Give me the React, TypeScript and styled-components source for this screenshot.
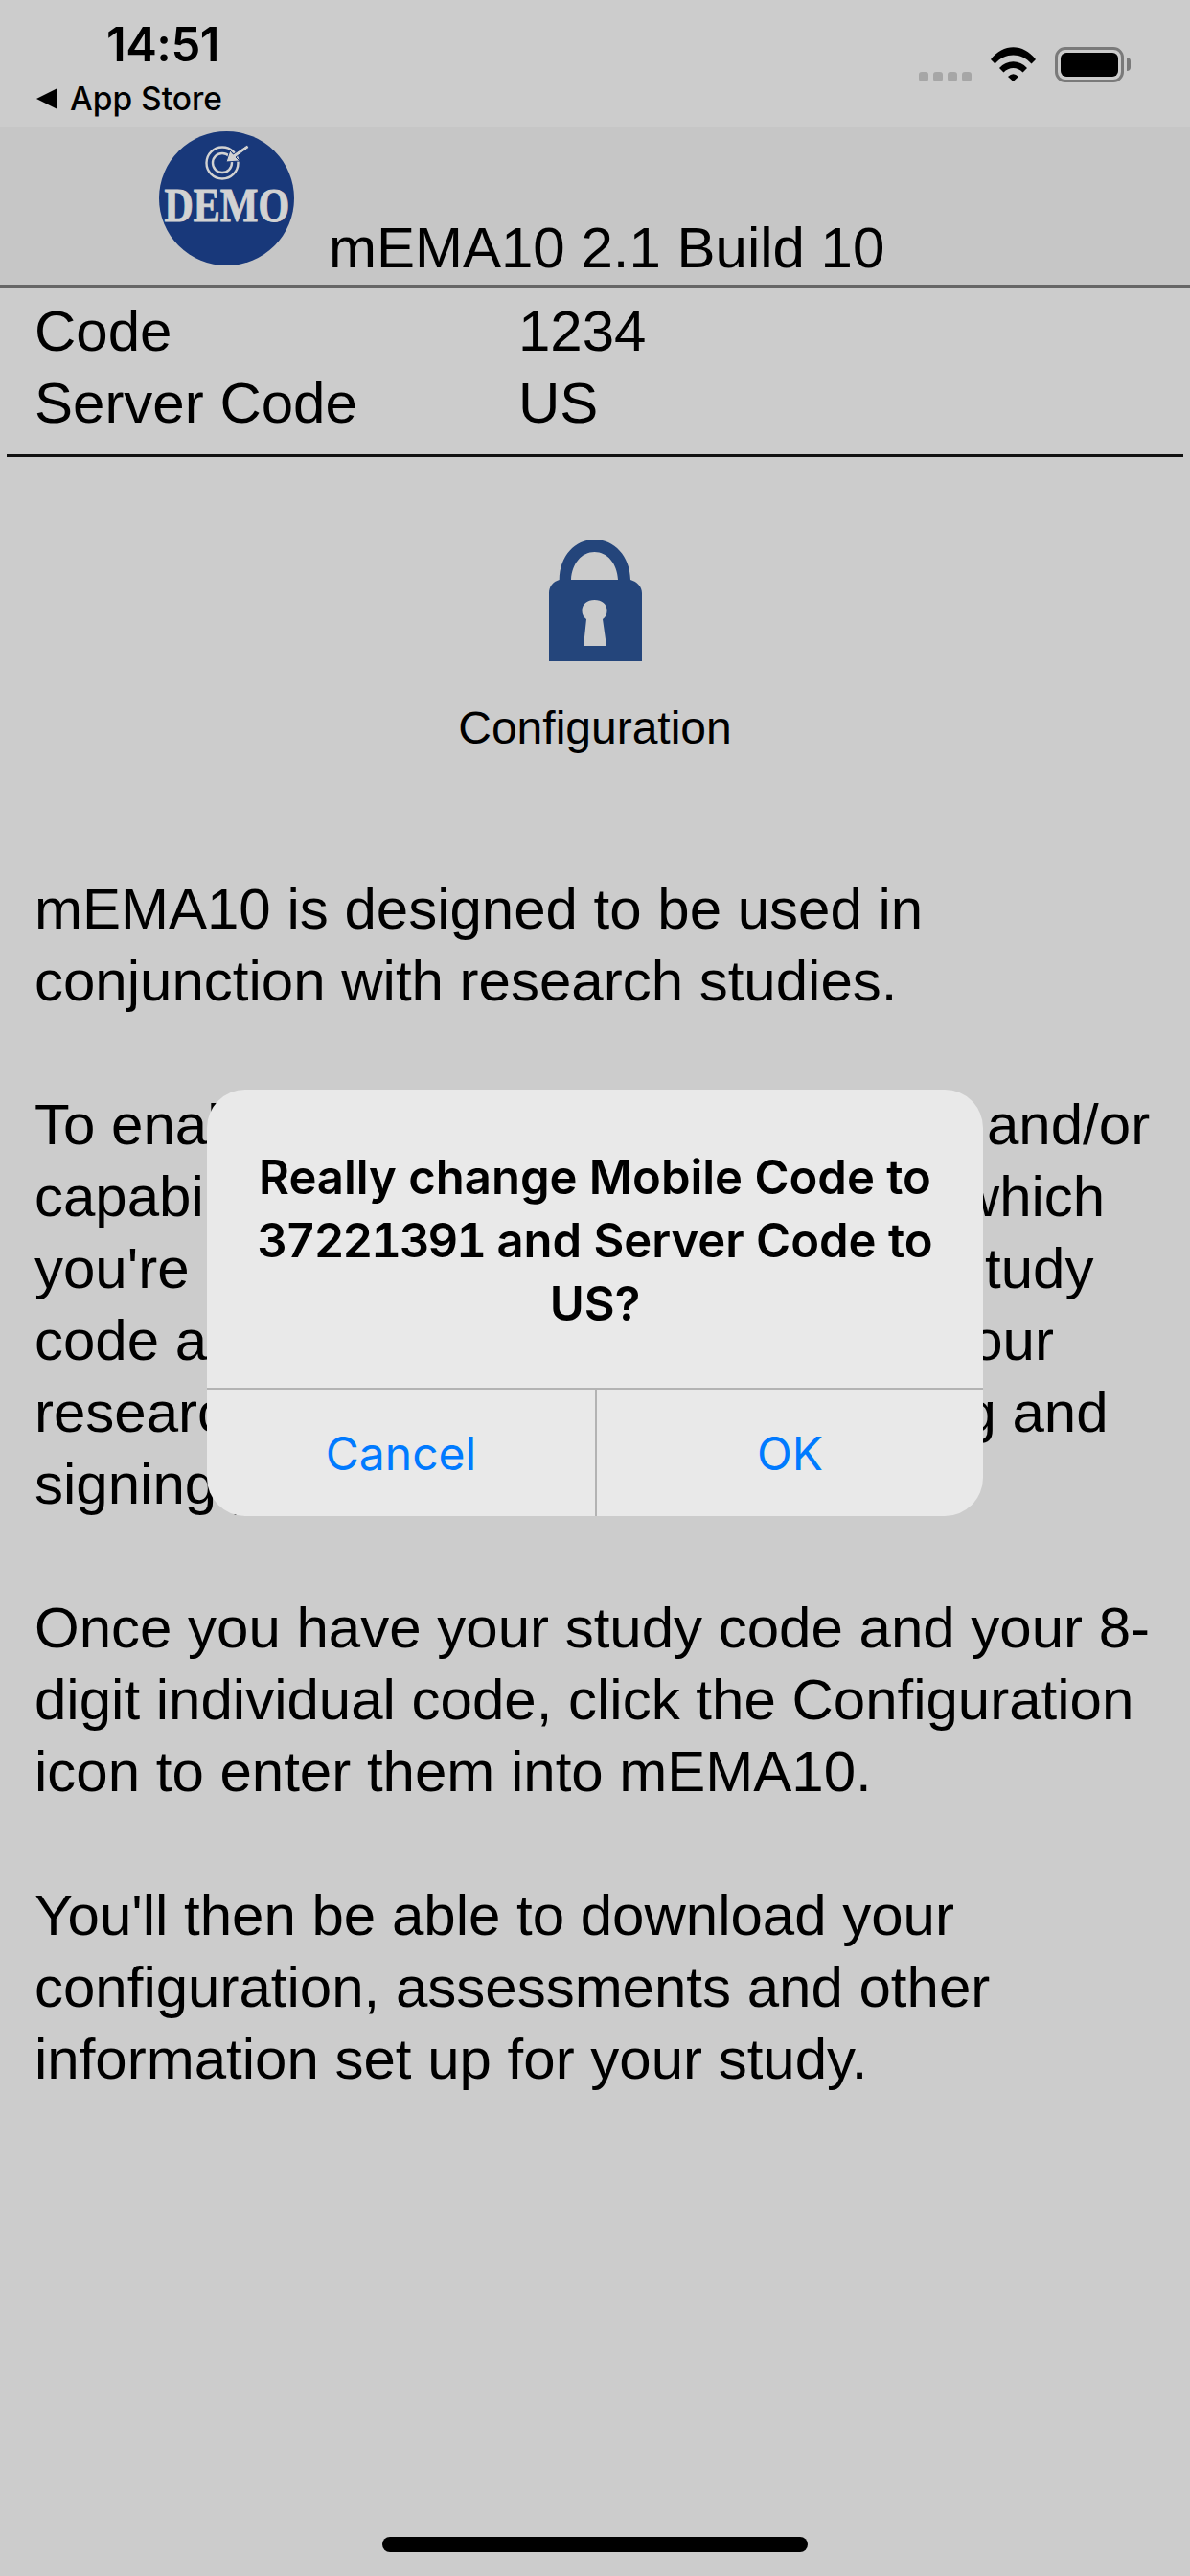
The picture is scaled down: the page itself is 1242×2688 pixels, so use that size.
import React from 'react';
import styled, { createGlobalStyle } from 'styled-components';

const GlobalStyle = createGlobalStyle`
    html, body {
        margin: 0;
        padding: 0;
        background: #cccccc;
    }
    body {
        font-family: "Liberation Sans", Arial, sans-serif;
        color: #000;
    }
`;

const paragraphs = [
    ['mEMA10 is designed to be used in', 'conjunction with research studies.'],
    [
        'To enable key additional functionality and/or',
        'capabilities of this research study in which',
        "you're participating, you first need a study",
        'code and individual user code from your',
        'research coordinators, after reviewing and',
        'signing your consent form.',
    ],
    [
        'Once you have your study code and your 8-',
        'digit individual code, click the Configuration',
        'icon to enter them into mEMA10.',
    ],
    [
        "You'll then be able to download your",
        'configuration, assessments and other',
        'information set up for your study.',
    ],
];

const App = () => {
    return (
        <Page>
            <GlobalStyle />
            <StatusBar>
                <StatusLeft>
                    <Time>14:51</Time>
                    <BackLink>
                        <BackArrow viewBox="0 0 22 22">
                            <path d="M0 11 L21 0.5 Q22 0.5 22 2 L22 20 Q22 21.5 21 21.5 Z" fill="#000" />
                        </BackArrow>
                        App Store
                    </BackLink>
                </StatusLeft>
                <StatusRight>
                    <SignalDots>
                        <i />
                        <i />
                        <i />
                        <i />
                    </SignalDots>
                    <WifiIcon viewBox="0 0 47 36">
                        <path
                            d="M0 13 C13 -4 34 -4 47 13 L42.5 17.5 C32 5.5 15 5.5 4.5 17.5 Z M9 22 C17 13 30 13 38 22 L33.5 26.5 C28 20.5 19 20.5 13.5 26.5 Z M18 31 Q23.5 25.5 29 31 L23.5 36 Z"
                            fill="#000"
                        />
                    </WifiIcon>
                    <Battery>
                        <BatteryFill />
                        <BatteryNub />
                    </Battery>
                </StatusRight>
            </StatusBar>

            <AppHeader>
                <Logo>
                    <TargetIcon viewBox="0 0 46 38">
                        <circle cx="18" cy="20" r="16.5" fill="none" stroke="#d2d2d2" strokeWidth="2.4" />
                        <circle cx="18" cy="20" r="10" fill="none" stroke="#d2d2d2" strokeWidth="2.4" />
                        <path d="M44 1 L46 4 L32 14 L36 18 L22 19 L26 7 L29.5 11 Z" fill="#d2d2d2" stroke="#18387a" strokeWidth="1" />
                    </TargetIcon>
                    <LogoText>DEMO</LogoText>
                </Logo>
                <AppTitle>mEMA10 2.1 Build 10</AppTitle>
            </AppHeader>

            <CodeTable>
                <CodeRow>
                    <CodeLabel>Code</CodeLabel>
                    <span>1234</span>
                </CodeRow>
                <CodeRow>
                    <CodeLabel>Server Code</CodeLabel>
                    <span>US</span>
                </CodeRow>
            </CodeTable>

            <ConfigButton>
                <LockIcon viewBox="0 0 97 127">
                    <path
                        fillRule="evenodd"
                        d="M10.7 42 C11 17 27 0 47.5 0 C68 0 84.5 17 85 42 C92 44 97 49 97 56 L97 127 L0 127 L0 56 C0 49 4 44 10.7 42 Z M23 42 L72 42 C71 25 61 13 47.5 13 C34 13 24 25 23 42 Z M39 83 L36 111 L60 111 L56 83 C59 81 60.5 78 60.5 74.5 C60.5 67 55 63 47.5 63 C40 63 34.5 67 34.5 74.5 C34.5 78 36 81 39 83 Z"
                        fill="#24457b"
                    />
                </LockIcon>
                <ConfigLabel>Configuration</ConfigLabel>
            </ConfigButton>

            <Intro>
                {paragraphs.map((lines) => (
                    <Paragraph key={lines[0]}>
                        {lines.map((line) => (
                            <BodyLine key={line}>{line}</BodyLine>
                        ))}
                    </Paragraph>
                ))}
            </Intro>

            <HomeIndicator />

            <Alert>
                <AlertTitle>
                    Really change Mobile Code to <Digits>37221391</Digits> and Server Code to US?
                </AlertTitle>
                <AlertActions>
                    <AlertButton>Cancel</AlertButton>
                    <AlertButton>OK</AlertButton>
                </AlertActions>
            </Alert>
        </Page>
    );
};

export default App;

const Page = styled.div`
    position: relative;
    display: flex;
    flex-direction: column;
    width: 1242px;
    height: 2688px;
    overflow: hidden;
    background: #cccccc;
`;

const StatusBar = styled.div`
    display: flex;
    justify-content: space-between;
    height: 132px;
    padding: 18px 69px 0 38px;
    box-sizing: border-box;
`;

const StatusLeft = styled.div`
    display: flex;
    flex-direction: column;
    font-family: Inter, "Noto Sans", sans-serif;
`;

const Time = styled.div`
    margin-left: 73px;
    font-size: 49px;
    font-weight: 600;
    line-height: 58px;
    letter-spacing: -0.5px;
`;

const BackLink = styled.div`
    display: flex;
    align-items: center;
    gap: 13px;
    margin-top: 7px;
    font-size: 33.5px;
    font-weight: 500;
    line-height: 40px;
`;

const BackArrow = styled.svg`
    width: 22px;
    height: 22px;
`;

const StatusRight = styled.div`
    display: flex;
    align-items: flex-start;
    padding-top: 31px;
`;

const SignalDots = styled.div`
    display: flex;
    gap: 5px;
    margin-top: 26px;

    i {
        width: 10px;
        height: 10px;
        border-radius: 3px;
        background: #a6a6a6;
    }
`;

const WifiIcon = styled.svg`
    width: 47px;
    height: 36px;
    margin-left: 20px;
`;

const Battery = styled.div`
    position: relative;
    width: 72px;
    height: 37px;
    margin-left: 20px;
    padding: 3px;
    box-sizing: border-box;
    border: 3px solid #7a7a7a;
    border-radius: 11px;
`;

const BatteryFill = styled.div`
    width: 100%;
    height: 100%;
    border-radius: 6px;
    background: #000;
`;

const BatteryNub = styled.div`
    position: absolute;
    top: 8px;
    right: -10px;
    width: 4px;
    height: 14px;
    border-radius: 0 7px 7px 0;
    background: #7a7a7a;
`;

const AppHeader = styled.div`
    display: flex;
    align-items: flex-end;
    height: 168px;
    padding: 5px 0 0 166px;
    box-sizing: border-box;
    border-bottom: 3px solid #666;
    background: #c6c6c6;
`;

const Logo = styled.div`
    display: flex;
    flex-direction: column;
    align-items: center;
    flex: none;
    width: 141px;
    height: 140px;
    margin-bottom: 20px;
    border-radius: 50%;
    background: #18387a;
`;

const TargetIcon = styled.svg`
    width: 46px;
    height: 38px;
    margin-top: 13px;
`;

const LogoText = styled.div`
    margin-top: 3px;
    font-family: "Liberation Serif", serif;
    font-size: 50px;
    font-weight: 700;
    line-height: 46px;
    color: #d2d2d2;
    transform: scaleX(0.84);
    -webkit-text-stroke: 1px #d2d2d2;
`;

const AppTitle = styled.div`
    margin-left: 36px;
    margin-bottom: 5px;
    font-size: 60px;
    line-height: 66px;
    white-space: nowrap;
`;

const CodeTable = styled.div`
    display: flex;
    flex-direction: column;
    margin: 0 7px;
    padding: 8px 29px 16px;
    border-bottom: 3px solid #111;
`;

const CodeRow = styled.div`
    display: flex;
    font-size: 60px;
    line-height: 75px;
`;

const CodeLabel = styled.span`
    width: 505px;
`;

const ConfigButton = styled.div`
    display: flex;
    flex-direction: column;
    align-items: center;
    margin-top: 86px;
`;

const LockIcon = styled.svg`
    width: 97px;
    height: 127px;
    margin-left: 1px;
`;

const ConfigLabel = styled.div`
    margin-top: 42px;
    font-size: 48px;
    line-height: 56px;
`;

const Intro = styled.div`
    display: flex;
    flex-direction: column;
    gap: 75px;
    margin-top: 123px;
    padding: 0 36px;
`;

const Paragraph = styled.p`
    margin: 0;
    font-size: 60px;
    line-height: 75px;
`;

const BodyLine = styled.span`
    display: block;
    white-space: nowrap;
`;

const HomeIndicator = styled.div`
    width: 444px;
    height: 16px;
    margin: auto auto 25px;
    border-radius: 8px;
    background: #000;
`;

const Alert = styled.div`
    position: absolute;
    top: 1137px;
    left: 216px;
    display: flex;
    flex-direction: column;
    width: 810px;
    height: 445px;
    border-radius: 40px;
    background: #e9e9e9;
    overflow: hidden;
`;

const AlertTitle = styled.div`
    flex: 1;
    padding: 59px 40px 0;
    font-family: Inter, "Noto Sans", sans-serif;
    font-size: 49px;
    font-weight: 600;
    line-height: 66px;
    text-align: center;
`;

const Digits = styled.span`
    font-variant-numeric: tabular-nums;
    letter-spacing: -2px;
`;

const AlertActions = styled.div`
    display: grid;
    grid-template-columns: 1fr 1fr;
    height: 132px;
    border-top: 2px solid #b3b3b3;
`;

const AlertButton = styled.div`
    display: flex;
    align-items: center;
    justify-content: center;
    font-family: Inter, "Noto Sans", sans-serif;
    font-size: 48px;
    color: #007aff;

    & + & {
        border-left: 2px solid #b3b3b3;
    }
`;
